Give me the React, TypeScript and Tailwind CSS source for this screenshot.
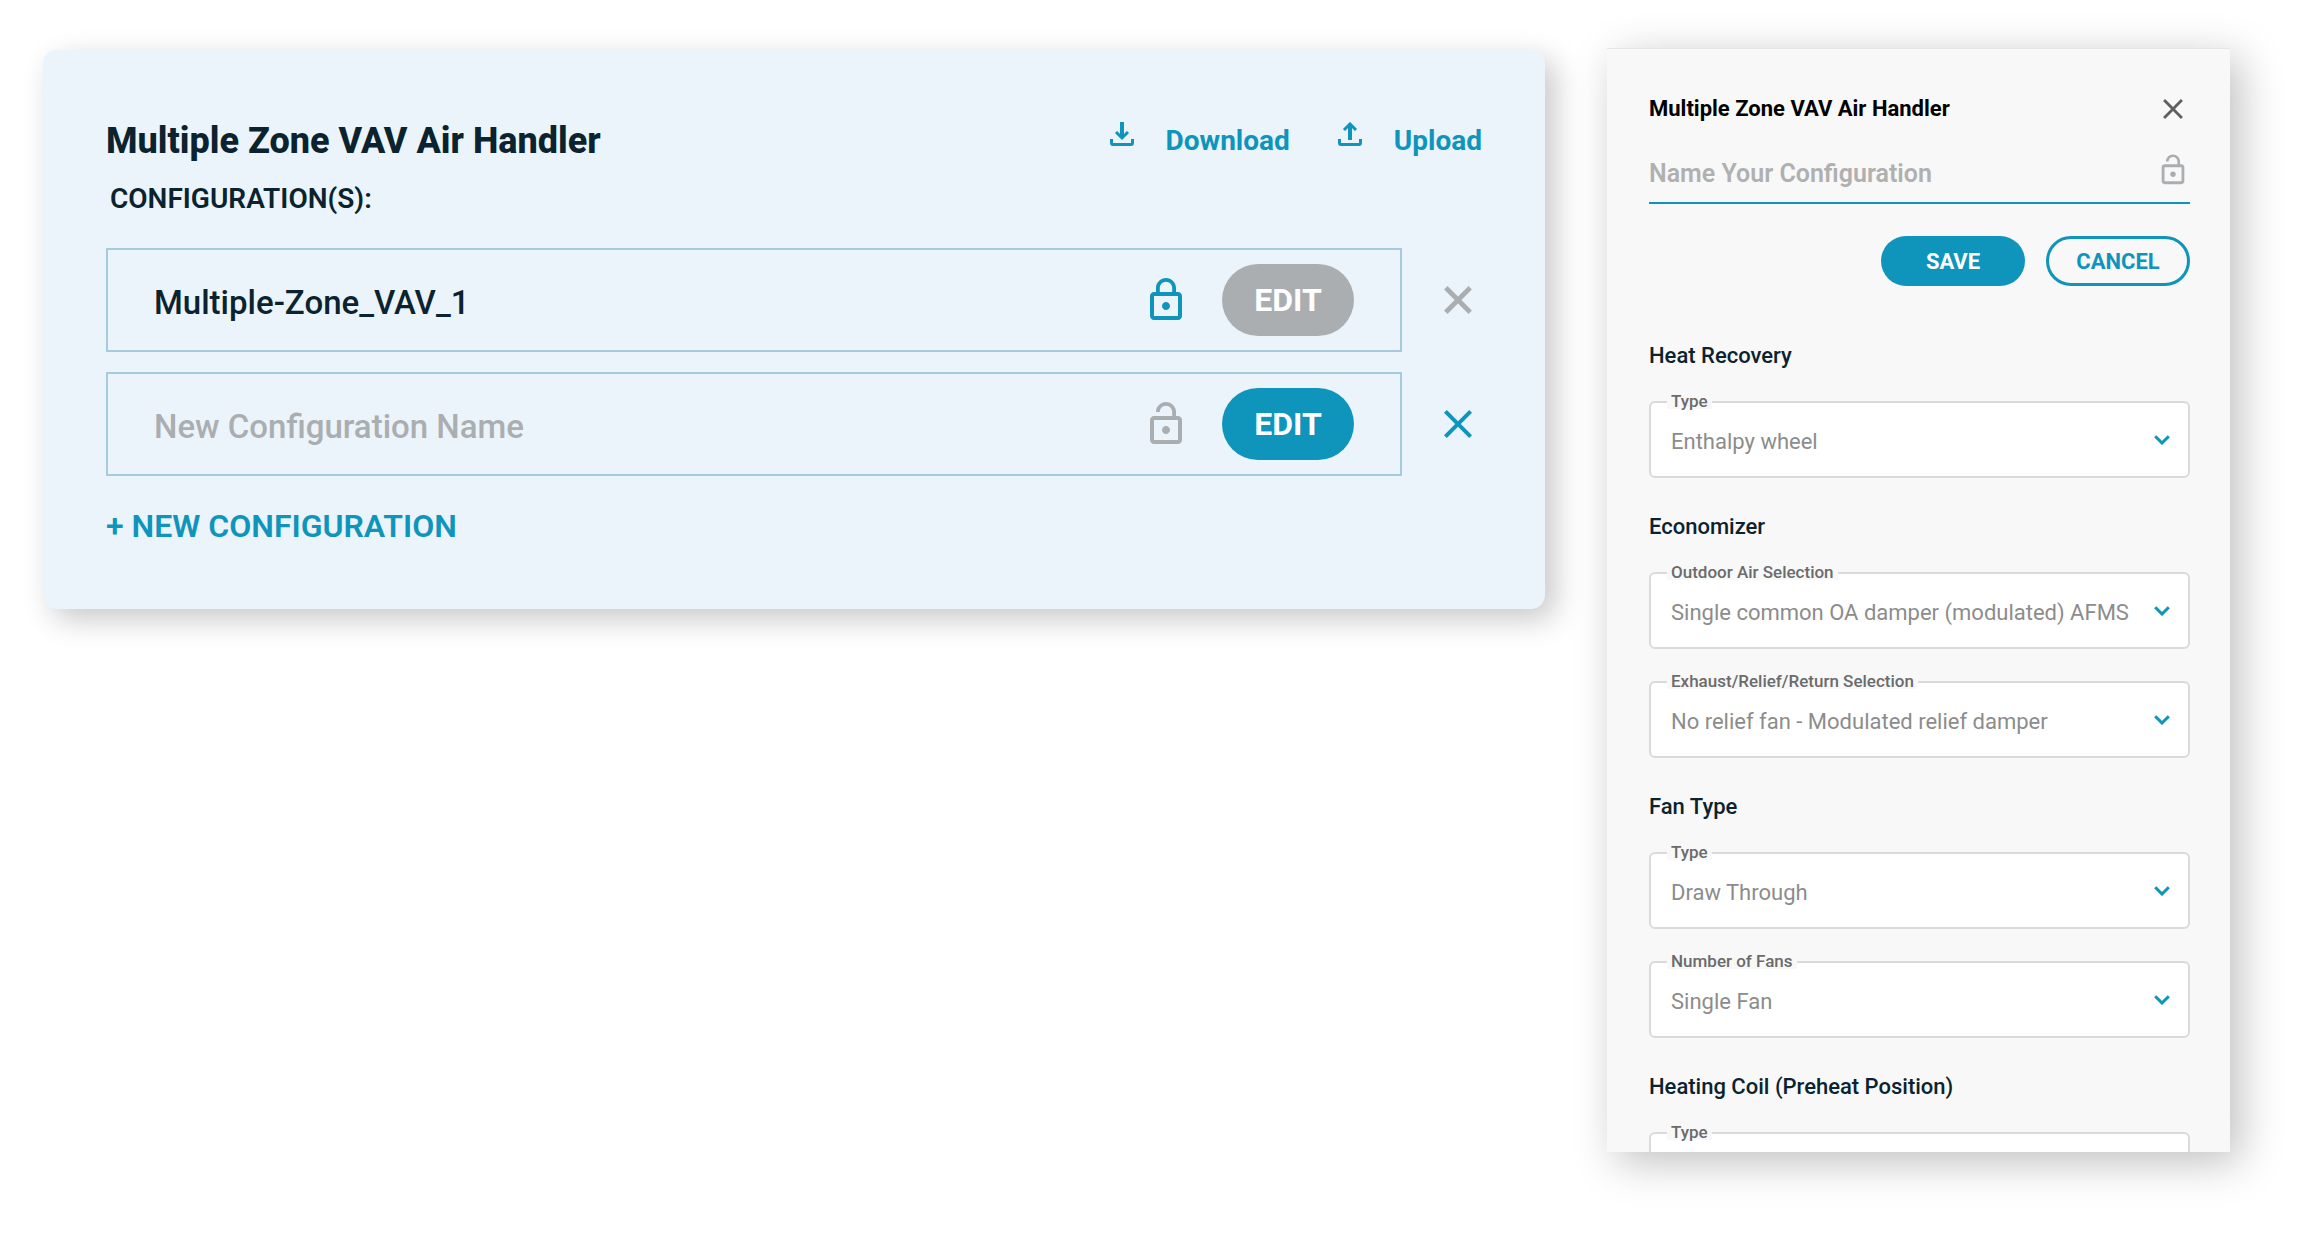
import { useState } from "react";
import { MdClose, MdLockOpen, MdLockOutline } from "react-icons/md";

type IconProps = { className?: string };

function DownloadIcon({ className }: IconProps) {
  return (
    <svg viewBox="0 0 24 24" fill="none" stroke="currentColor" className={className} aria-hidden="true">
      <path d="M12 0v15" strokeWidth="4" />
      <path d="M6 10l6 6 6-6" strokeWidth="3" />
      <path d="M1.5 17v4a1.5 1.5 0 0 0 1.5 1.5h18a1.5 1.5 0 0 0 1.5-1.5v-4" strokeWidth="3" />
    </svg>
  );
}

function UploadIcon({ className }: IconProps) {
  return (
    <svg viewBox="0 0 24 24" fill="none" stroke="currentColor" className={className} aria-hidden="true">
      <path d="M12 3v15" strokeWidth="4" />
      <path d="M6 8l6-6 6 6" strokeWidth="3" />
      <path d="M1.5 17v4a1.5 1.5 0 0 0 1.5 1.5h18a1.5 1.5 0 0 0 1.5-1.5v-4" strokeWidth="3" />
    </svg>
  );
}

function BoldCloseIcon({ className }: IconProps) {
  return (
    <svg viewBox="0 0 24 24" fill="none" stroke="currentColor" className={className} aria-hidden="true">
      <path d="M5.9 5.9l12.2 12.2M18.1 5.9L5.9 18.1" strokeWidth="2.4" />
    </svg>
  );
}

function ChevronIcon({ className }: IconProps) {
  return (
    <svg viewBox="0 0 16 10" fill="none" stroke="currentColor" className={className} aria-hidden="true">
      <path d="M1.2 1.2L8 8l6.8-6.8" strokeWidth="3" />
    </svg>
  );
}

function ConfigRow({ initial, locked }: { initial: string; locked: boolean }) {
  const [name, setName] = useState(initial);
  return (
    <li className="flex items-center gap-8">
      <div className="flex h-[104px] min-w-0 flex-1 items-center border-2 border-[#a6cbdc] pr-[46px] pl-[46px]">
        <input
          aria-label="Configuration name"
          value={name}
          onChange={(e) => setName(e.target.value)}
          placeholder="New Configuration Name"
          className="mt-1.5 h-12 min-w-0 flex-1 bg-transparent text-[33px] font-medium text-[#0b232e] outline-none placeholder:text-[#abaeb1] placeholder:opacity-100"
        />
        <button type="button" aria-label={locked ? "Unlock" : "Lock"} className={locked ? "text-[#0f94bb]" : "text-[#abaeb1]"}>
          {locked ? <MdLockOutline className="size-12" /> : <MdLockOpen className="size-12" />}
        </button>
        <button
          type="button"
          className={
            locked
              ? "ml-8 h-[72px] w-[132px] rounded-full bg-[#abaeb1] text-[32px] font-bold text-white"
              : "ml-8 h-[72px] w-[132px] rounded-full bg-[#0f94bb] text-[32px] font-bold text-white"
          }
        >
          EDIT
        </button>
      </div>
      <button type="button" aria-label="Remove configuration" className={locked ? "text-[#abaeb1]" : "text-[#0f94bb]"}>
        {locked ? <BoldCloseIcon className="size-12" /> : <MdClose className="size-12" />}
      </button>
    </li>
  );
}

function SelectField({ id, label, options }: { id: string; label: string; options: string[] }) {
  return (
    <div className="relative">
      <select
        id={id}
        className="block h-[77px] w-full appearance-none rounded-md border-2 border-[#dadada] bg-white pt-1 pr-10 pl-5 text-[22px] text-[#8c8c8c] outline-none"
      >
        {options.map((o) => (
          <option key={o}>{o}</option>
        ))}
      </select>
      <label
        htmlFor={id}
        className="absolute -top-2 left-[18px] bg-[#f8f8f8] px-1 text-[17px] leading-4 font-medium text-[#6b6b6b]"
      >
        {label}
      </label>
      <ChevronIcon className="pointer-events-none absolute top-[34px] right-5 h-2.5 w-4 text-[#0f94bb]" />
    </div>
  );
}

const groups = [
  { title: "Heat Recovery", fields: [{ label: "Type", options: ["Enthalpy wheel"] }] },
  {
    title: "Economizer",
    fields: [
      { label: "Outdoor Air Selection", options: ["Single common OA damper (modulated) AFMS"] },
      { label: "Exhaust/Relief/Return Selection", options: ["No relief fan - Modulated relief damper"] },
    ],
  },
  {
    title: "Fan Type",
    fields: [
      { label: "Type", options: ["Draw Through"] },
      { label: "Number of Fans", options: ["Single Fan"] },
    ],
  },
  { title: "Heating Coil (Preheat Position)", fields: [{ label: "Type", options: [""] }] },
];

export default function App() {
  const [configName, setConfigName] = useState("");
  return (
    <main className="flex h-screen items-stretch gap-[62px] bg-white pt-12 pr-[70px] pb-[85px] pl-[43px] font-['Roboto',sans-serif]">
      <section className="mt-0.5 min-w-0 flex-1 self-start rounded-[14px] bg-[#ebf4fb] px-[63px] pt-[67px] pb-[63px] shadow-[10px_10px_30px_rgba(0,0,0,0.22)]">
        <header className="flex items-center justify-between">
          <h1 className="text-4xl leading-[48px] font-extrabold text-[#0b232e]">Multiple Zone VAV Air Handler</h1>
          <div className="flex items-center gap-12 text-[28px] leading-8 font-bold text-[#0f94bb]">
            <button type="button" className="flex items-center gap-8">
              <DownloadIcon className="mb-3.5 size-6" />
              Download
            </button>
            <button type="button" className="flex items-center gap-8">
              <UploadIcon className="mb-3.5 size-6" />
              Upload
            </button>
          </div>
        </header>
        <h2 className="mt-4 pl-1 text-[28px] leading-9 font-semibold text-[#0b232e]">CONFIGURATION(S):</h2>
        <ul className="mt-[31px] flex flex-col gap-5">
          <ConfigRow initial="Multiple-Zone_VAV_1" locked />
          <ConfigRow initial="" locked={false} />
        </ul>
        <button type="button" className="mt-[30px] block text-[32px] leading-10 font-semibold text-[#0f94bb]">
          + NEW CONFIGURATION
        </button>
      </section>

      <aside className="w-[623px] shrink-0 overflow-hidden border-t border-[#e6e6e6] bg-[#f8f8f8] pr-10 pl-[42px] shadow-[10px_10px_40px_rgba(0,0,0,0.25)]">
        <header className="mt-[43px] flex items-center justify-between">
          <h2 className="text-[22px] leading-8 font-bold text-black">Multiple Zone VAV Air Handler</h2>
          <button type="button" aria-label="Close" className="text-[#5f5f5f]">
            <MdClose className="size-[34px]" />
          </button>
        </header>
        <div className="mt-[27px] flex h-[51px] items-start justify-between border-b-2 border-[#0f94bb]">
          <input
            aria-label="Name Your Configuration"
            value={configName}
            onChange={(e) => setConfigName(e.target.value)}
            placeholder="Name Your Configuration"
            className="h-10 min-w-0 flex-1 bg-transparent text-[25px] font-semibold text-black outline-none placeholder:text-[#b0b0b0] placeholder:opacity-100"
          />
          <button type="button" aria-label="Lock" className="text-[#abaeb1]">
            <MdLockOpen className="size-[34px]" />
          </button>
        </div>
        <div className="mt-8 flex justify-end gap-[21px]">
          <button type="button" className="h-[50px] w-36 rounded-full bg-[#0f94bb] text-[22px] font-bold text-white">
            SAVE
          </button>
          <button
            type="button"
            className="h-[50px] w-36 rounded-full border-3 border-[#0f94bb] text-[22px] font-bold text-[#0f94bb]"
          >
            CANCEL
          </button>
        </div>
        <form className="mt-[57px] flex flex-col gap-9">
          {groups.map((g) => (
            <section key={g.title}>
              <h3 className="text-[22px] leading-[26px] font-medium text-[#0b232e]">{g.title}</h3>
              <div className="mt-8 flex flex-col gap-8">
                {g.fields.map((f) => (
                  <SelectField key={f.label} id={`${g.title}-${f.label}`} label={f.label} options={f.options} />
                ))}
              </div>
            </section>
          ))}
        </form>
      </aside>
    </main>
  );
}
